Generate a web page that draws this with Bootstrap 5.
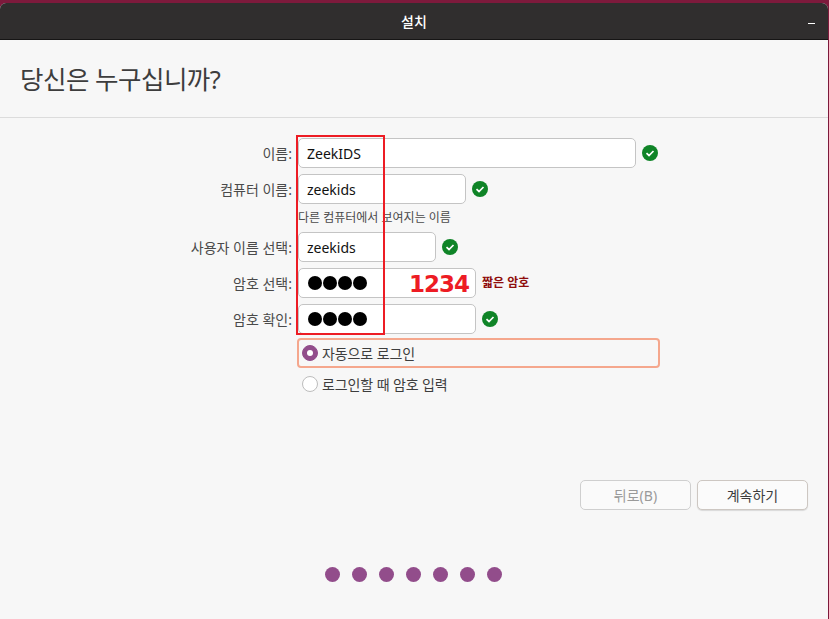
<!DOCTYPE html>
<html lang="ko">
<head>
  <meta charset="UTF-8">
  <title>설치</title>
  <link href="https://cdn.jsdelivr.net/npm/bootstrap@5.3.3/dist/css/bootstrap.min.css" rel="stylesheet">
  <style>
    html, body { height: 100%; }
    body {
      margin: 0; overflow: hidden; background: #7d1a3c;
      font-family: "Noto Sans", "Noto Sans CJK KR", sans-serif; font-size: 14px; color: #3d3d3d;
    }
    .app-window { height: 616px; margin: 3px 1px 0 0; background: #f7f7f7; position: relative; border-radius: 6px 6px 0 0; overflow: hidden; }
    .title-bar { height: 37px; background: #302e2e; color: #fff; font-weight: 500; font-size: 14px; border-bottom: 1px solid #161515; position: relative; }
    .min-btn { position: absolute; right: 13px; top: 20px; width: 7px; height: 1px; background: #fff; }
    .page-head { height: 78px; padding: 3px 0 0 20px; border-bottom: 1px solid #dcdcdc; font-size: 25.5px; line-height: 1; color: #3d3d3d; letter-spacing: -0.5px; }
    .form-area { padding-top: 20px; }
    .field-row { height: 30px; margin-bottom: 6px; }
    .field-label { width: 292px; text-align: right; color: #4a4a4a; flex: none; }
    .field-box { height: 30px; margin-left: 6px; padding: 0 8px; background: #fff; border: 1px solid #c4c4c4; border-radius: 5px; color: #111; font-size: 14px; flex: none; }
    .w-name { width: 338px; }
    .w-host { width: 168px; }
    .w-user { width: 138px; }
    .w-pass { width: 178px; }
    .secret { font-size: 0; gap: 1px; padding-left: 9px; }
    .secret i { width: 14px; height: 14px; border-radius: 50%; background: #000; display: block; }
    .check-ok { margin-left: 6px; flex: none; }
    .hint-text { margin: 5px 0 5px 298px; height: 18px; line-height: 18px; font-size: 12px; color: #4a4a4a; }
    .weak-text { margin-left: 6px; font-size: 12px; font-weight: 700; color: #8f0d0d; }
    .login-choice { margin-left: 297px; width: 363px; height: 30px; padding-left: 5px; gap: 4px; color: #3d3d3d; letter-spacing: -0.1px; }
    .login-choice.picked { border: 2px solid #f5a78d; border-radius: 4px; margin-top: -2px; padding-left: 3px; }
    .login-choice.plain { margin-top: 1px; }
    .radio-dot { width: 16px; height: 16px; border-radius: 50%; flex: none; }
    .radio-on { background: #924d8b; border: 1px solid #924d8b; position: relative; }
    .radio-on::after { content: ""; position: absolute; left: 4px; top: 4px; width: 6px; height: 6px; border-radius: 50%; background: #fff; }
    .radio-off { background: #fff; border: 1px solid #bdbdbd; }
    .action-row { position: absolute; right: 20px; top: 477px; gap: 6px; }
    .gtk-btn { width: 111px; height: 30px; padding: 0; font-size: 14px; border-radius: 5px; background: #fbfbfb; border: 1px solid #cdc7c2; color: #3d3d3d; box-shadow: 0 1px 1px rgba(0,0,0,.12); --bs-btn-disabled-opacity: 1; }
    .gtk-btn:disabled { background: #fafafa; border-color: #cfcfcf; color: #9a9a9a; box-shadow: none; }
    .step-dots { position: absolute; left: 0; right: 0; top: 564px; gap: 12px; padding-right: 2px; }
    .step-dots i { width: 15px; height: 15px; border-radius: 50%; background: #924d8b; display: block; }
    .mark-rect { position: absolute; left: 296px; top: 132px; width: 89px; height: 200px; border: 2px solid #ed1c24; pointer-events: none; }
    .mark-num { position: absolute; left: 409px; top: 268px; font-family: "DejaVu Sans", sans-serif; font-weight: 700; font-size: 23px; line-height: 1.2; letter-spacing: -1px; color: #ed1c24; }
  </style>
</head>
<body>

<div class="app-window">
  <div class="title-bar d-flex align-items-center justify-content-center">
    <span>설치</span>
    <span class="min-btn"></span>
  </div>

  <div class="page-head d-flex align-items-center">당신은 누구십니까?</div>

  <div class="form-area">
    <div class="field-row d-flex align-items-center">
      <div class="field-label">이름:</div>
      <div class="field-box w-name d-flex align-items-center">ZeekIDS</div>
      <svg class="check-ok" width="16" height="16" viewBox="0 0 16 16"><circle cx="8" cy="8" r="8" fill="#0f8427"/><path d="M4.5 8.2 7 10.5 11.5 6" fill="none" stroke="#fff" stroke-width="1.7"/></svg>
    </div>
    <div class="field-row d-flex align-items-center mb-0">
      <div class="field-label">컴퓨터 이름:</div>
      <div class="field-box w-host d-flex align-items-center">zeekids</div>
      <svg class="check-ok" width="16" height="16" viewBox="0 0 16 16"><circle cx="8" cy="8" r="8" fill="#0f8427"/><path d="M4.5 8.2 7 10.5 11.5 6" fill="none" stroke="#fff" stroke-width="1.7"/></svg>
    </div>
    <div class="hint-text">다른 컴퓨터에서 보여지는 이름</div>
    <div class="field-row d-flex align-items-center">
      <div class="field-label">사용자 이름 선택:</div>
      <div class="field-box w-user d-flex align-items-center">zeekids</div>
      <svg class="check-ok" width="16" height="16" viewBox="0 0 16 16"><circle cx="8" cy="8" r="8" fill="#0f8427"/><path d="M4.5 8.2 7 10.5 11.5 6" fill="none" stroke="#fff" stroke-width="1.7"/></svg>
    </div>
    <div class="field-row d-flex align-items-center">
      <div class="field-label">암호 선택:</div>
      <div class="field-box w-pass secret d-flex align-items-center"><i></i><i></i><i></i><i></i></div>
      <span class="weak-text">짧은 암호</span>
    </div>
    <div class="field-row d-flex align-items-center">
      <div class="field-label">암호 확인:</div>
      <div class="field-box w-pass secret d-flex align-items-center"><i></i><i></i><i></i><i></i></div>
      <svg class="check-ok" width="16" height="16" viewBox="0 0 16 16"><circle cx="8" cy="8" r="8" fill="#0f8427"/><path d="M4.5 8.2 7 10.5 11.5 6" fill="none" stroke="#fff" stroke-width="1.7"/></svg>
    </div>
    <div class="login-choice picked d-flex align-items-center"><span class="radio-dot radio-on"></span>자동으로 로그인</div>
    <div class="login-choice plain d-flex align-items-center"><span class="radio-dot radio-off"></span>로그인할 때 암호 입력</div>
  </div>

  <div class="action-row d-flex">
    <button class="btn gtk-btn" disabled>뒤로(B)</button>
    <button class="btn gtk-btn">계속하기</button>
  </div>

  <div class="step-dots d-flex justify-content-center">
    <i></i><i></i><i></i><i></i><i></i><i></i><i></i>
  </div>

  <div class="mark-rect"></div>
  <div class="mark-num">1234</div>
</div>

<script src="https://cdn.jsdelivr.net/npm/bootstrap@5.3.3/dist/js/bootstrap.bundle.min.js"></script>
</body>
</html>
